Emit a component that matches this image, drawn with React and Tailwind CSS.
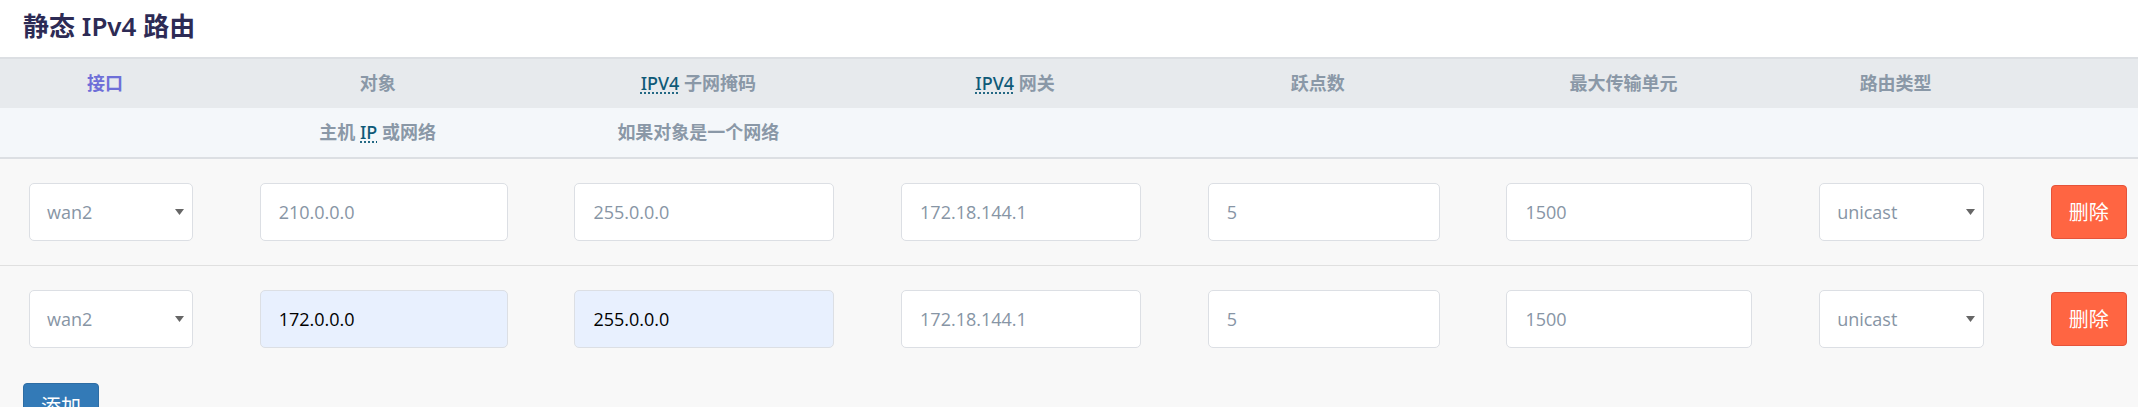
const routes = [
    { iface: "wan2", target: "210.0.0.0", mask: "255.0.0.0", gateway: "172.18.144.1", metric: "5", mtu: "1500", type: "unicast", filled: false },
    { iface: "wan2", target: "172.0.0.0", mask: "255.0.0.0", gateway: "172.18.144.1", metric: "5", mtu: "1500", type: "unicast", filled: true },
]

const grid = "grid grid-cols-[164px_248px_260px_240px_232px_246px_165px_76px] gap-x-[66.7px] pl-[29px]"

function Abbr({ children }) {
    return (
        <span className="font-medium text-[#0f5a78] underline decoration-dotted decoration-[#0f5a78] underline-offset-[3px]">{children}</span>
    )
}

function Select({ value }) {
    return (
        <div className="h-[58px] flex items-center justify-between pl-[17px] pr-[8px] bg-white border border-[#dcdfe4] rounded-[5px] text-[18px] text-[#8795a5]">
            <span>{value}</span>
            <svg width="9" height="6" viewBox="0 0 9 6">
                <path d="M0 0 L9 0 L4.5 6 Z" fill="#666" />
            </svg>
        </div>
    )
}

function Field({ value, filled }) {
    return (
        <input
            readOnly
            value={value}
            className={`h-[58px] w-full px-[18px] border border-[#dcdfe4] rounded-[5px] text-[18px] outline-none ${filled ? "bg-[#e8f0fe] text-black" : "bg-white text-[#8795a5]"}`}
        />
    )
}

export default function App() {
    return (
        <div className="min-h-screen bg-[#f8f8f8] font-['Open_Sans','Noto_Sans_CJK_SC',sans-serif]">
            <div className="bg-white h-[57px] pl-[23px] flex items-center">
                <h1 className="text-[26px] font-semibold text-[#2d2b55] font-['Noto_Sans','Noto_Sans_CJK_SC',sans-serif] leading-none -mt-[6px]">静态 IPv4 路由</h1>
            </div>

            {/* header */}
            <div className="border-t-2 border-[#dcdfe3] border-b-2 text-[18px] font-bold text-[#8a98a7] font-['Noto_Sans','Noto_Sans_CJK_SC',sans-serif]">
                <div className={`${grid} bg-[#e7eaed] h-[49px] items-center`}>
                    <div className="text-center pr-3 text-[#6e6fd8]">接口</div>
                    <div className="text-center pr-3">对象</div>
                    <div className="text-center pr-3"><Abbr>IPV4</Abbr> 子网掩码</div>
                    <div className="text-center pr-3"><Abbr>IPV4</Abbr> 网关</div>
                    <div className="text-center pr-3">跃点数</div>
                    <div className="text-center pr-3">最大传输单元</div>
                    <div className="text-center pr-3">路由类型</div>
                    <div />
                </div>
                <div className={`${grid} bg-[#f4f7fa] h-[49px] items-center`}>
                    <div />
                    <div className="text-center pr-3">主机 <Abbr>IP</Abbr> 或网络</div>
                    <div className="text-center pr-3">如果对象是一个网络</div>
                    <div />
                    <div />
                    <div />
                    <div />
                    <div />
                </div>
            </div>

            {/* rows */}
            {routes.map((r, i) => (
                <div key={i} className={`${grid} py-6 items-center ${i === 0 ? "border-b border-[#e0e0e0]" : ""}`}>
                    <Select value={r.iface} />
                    <Field value={r.target} filled={r.filled} />
                    <Field value={r.mask} filled={r.filled} />
                    <Field value={r.gateway} />
                    <Field value={r.metric} />
                    <Field value={r.mtu} />
                    <Select value={r.type} />
                    <button className="h-[54px] bg-[#ff6542] border border-[#e5533a] rounded-[4px] text-white text-[20px] font-['Noto_Sans_CJK_SC',sans-serif]">
                        删除
                    </button>
                </div>
            ))}

            <div className="pl-[23px] pt-[11px]">
                <button className="w-[76px] h-[46px] bg-[#337ab7] border border-[#2e6da4] rounded-[4px] text-white text-[20px] font-['Noto_Sans_CJK_SC',sans-serif]">
                    添加
                </button>
            </div>
        </div>
    )
}
